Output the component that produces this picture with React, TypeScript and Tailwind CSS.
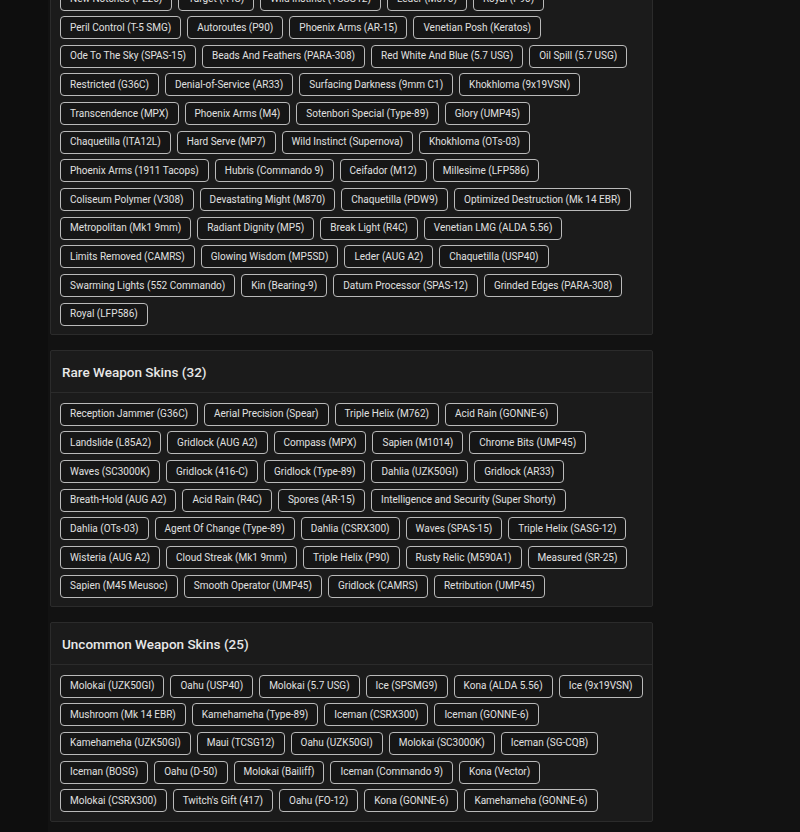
import React from "react";

type Section = {
  title?: string;
  rows: string[];
};

// epic list is scrolled, its header sits above the viewport
const epic: Section = {
  rows: [
    "New Notches (P226)", "Target (R4C)", "Wild Instinct (TCSG12)", "Leder (M870)", "Royal (P90)",
    "Peril Control (T-5 SMG)", "Autoroutes (P90)", "Phoenix Arms (AR-15)", "Venetian Posh (Keratos)",
    "Ode To The Sky (SPAS-15)", "Beads And Feathers (PARA-308)", "Red White And Blue (5.7 USG)", "Oil Spill (5.7 USG)",
    "Restricted (G36C)", "Denial-of-Service (AR33)", "Surfacing Darkness (9mm C1)", "Khokhloma (9x19VSN)",
    "Transcendence (MPX)", "Phoenix Arms (M4)", "Sotenbori Special (Type-89)", "Glory (UMP45)",
    "Chaquetilla (ITA12L)", "Hard Serve (MP7)", "Wild Instinct (Supernova)", "Khokhloma (OTs-03)",
    "Phoenix Arms (1911 Tacops)", "Hubris (Commando 9)", "Ceifador (M12)", "Millesime (LFP586)",
    "Coliseum Polymer (V308)", "Devastating Might (M870)", "Chaquetilla (PDW9)", "Optimized Destruction (Mk 14 EBR)",
    "Metropolitan (Mk1 9mm)", "Radiant Dignity (MP5)", "Break Light (R4C)", "Venetian LMG (ALDA 5.56)",
    "Limits Removed (CAMRS)", "Glowing Wisdom (MP5SD)", "Leder (AUG A2)", "Chaquetilla (USP40)",
    "Swarming Lights (552 Commando)", "Kin (Bearing-9)", "Datum Processor (SPAS-12)", "Grinded Edges (PARA-308)",
    "Royal (LFP586)",
  ],
};

const rare: Section = {
  title: "Rare Weapon Skins (32)",
  rows: [
    "Reception Jammer (G36C)", "Aerial Precision (Spear)", "Triple Helix (M762)", "Acid Rain (GONNE-6)",
    "Landslide (L85A2)", "Gridlock (AUG A2)", "Compass (MPX)", "Sapien (M1014)", "Chrome Bits (UMP45)",
    "Waves (SC3000K)", "Gridlock (416-C)", "Gridlock (Type-89)", "Dahlia (UZK50GI)", "Gridlock (AR33)",
    "Breath-Hold (AUG A2)", "Acid Rain (R4C)", "Spores (AR-15)", "Intelligence and Security (Super Shorty)",
    "Dahlia (OTs-03)", "Agent Of Change (Type-89)", "Dahlia (CSRX300)", "Waves (SPAS-15)", "Triple Helix (SASG-12)",
    "Wisteria (AUG A2)", "Cloud Streak (Mk1 9mm)", "Triple Helix (P90)", "Rusty Relic (M590A1)", "Measured (SR-25)",
    "Sapien (M45 Meusoc)", "Smooth Operator (UMP45)", "Gridlock (CAMRS)", "Retribution (UMP45)",
  ],
};

const uncommon: Section = {
  title: "Uncommon Weapon Skins (25)",
  rows: [
    "Molokai (UZK50GI)", "Oahu (USP40)", "Molokai (5.7 USG)", "Ice (SPSMG9)", "Kona (ALDA 5.56)", "Ice (9x19VSN)",
    "Mushroom (Mk 14 EBR)", "Kamehameha (Type-89)", "Iceman (CSRX300)", "Iceman (GONNE-6)",
    "Kamehameha (UZK50GI)", "Maui (TCSG12)", "Oahu (UZK50GI)", "Molokai (SC3000K)", "Iceman (SG-CQB)",
    "Iceman (BOSG)", "Oahu (D-50)", "Molokai (Bailiff)", "Iceman (Commando 9)", "Kona (Vector)",
    "Molokai (CSRX300)", "Twitch's Gift (417)", "Oahu (FO-12)", "Kona (GONNE-6)", "Kamehameha (GONNE-6)",
  ],
};

const Tag = ({ label }: { label: string }) => (
  <span className="h-[23px] px-[9px] flex items-center border border-[#bababa] rounded-[4px] bg-[#161616] text-[10px] leading-none text-[#e0e0e0] whitespace-nowrap">
    {label}
  </span>
);

const SkinCard = ({ section, className = "" }: { section: Section; className?: string }) => (
  <section className={`bg-[#1b1b1b] border border-[#2b2b2b] rounded-[2px] ${className}`}>
    {section.title && (
      <h2 className="h-[42px] px-[11px] flex items-center border-b border-[#2b2b2b] text-[13.5px] font-medium text-[#e8e8e8]">
        {section.title}
      </h2>
    )}
    <div className="flex flex-wrap gap-x-[6px] gap-y-[5.67px] px-[9px] pt-[9.5px] pb-[8.5px]">
      {section.rows.map((r, i) => (
        <Tag key={i} label={r} />
      ))}
    </div>
  </section>
);

export default function App() {
  return (
    <div className="min-h-screen flex bg-[#121212] font-[Roboto,'Liberation_Sans',sans-serif] overflow-hidden">
      <aside className="w-[48px] shrink-0 bg-[#0e0e0e]" />
      <main className="ml-[2px] w-[603px] pb-[20px]">
        <SkinCard section={epic} className="-mt-[23px]" />
        <SkinCard section={rare} className="mt-[15px]" />
        <SkinCard section={uncommon} className="mt-[15px]" />
      </main>
    </div>
  );
}
